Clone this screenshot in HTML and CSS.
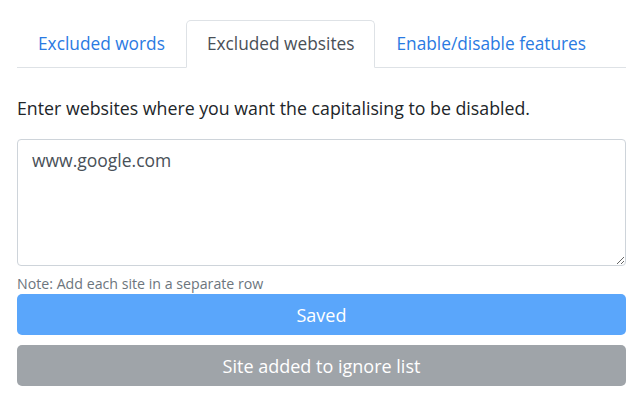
FILE: index.html
```html
<!DOCTYPE html>
<html lang="en">
<head>
<meta charset="utf-8">
<link rel="stylesheet" href="styles.css">
</head>
<body>
<div class="page">
  <ul class="tabs">
    <li class="tab"><a class="tab-link">Excluded words</a></li>
    <li class="tab"><a class="tab-link active">Excluded websites</a></li>
    <li class="tab"><a class="tab-link">Enable/disable features</a></li>
  </ul>
  <p class="intro">Enter websites where you want the capitalising to be disabled.</p>
  <textarea class="sites">www.google.com</textarea>
  <div class="note">Note: Add each site in a separate row</div>
  <button class="btn btn-primary">Saved</button>
  <button class="btn btn-secondary">Site added to ignore list</button>
</div>
</body>
</html>
```
FILE: styles.css
```css
* { box-sizing: border-box; }
html, body { margin: 0; padding: 0; background: #fff; }
body {
  font-family: "Open Sans", "Noto Sans", sans-serif;
  font-size: 17.5px;
  color: #212529;
}
.page {
  padding: 20px 14px 0 17px;
  display: flex;
  flex-direction: column;
}
.tabs {
  list-style: none;
  margin: 0;
  padding: 0;
  display: flex;
  border-bottom: 1px solid #dee2e6;
}
.tab { margin-bottom: -1px; }
.tab-link {
  display: block;
  height: 48px;
  line-height: 46px;
  padding: 0 20px;
  font-size: 17.3px;
  color: #2a7ae2;
  border: 1px solid transparent;
  border-top-left-radius: 5px;
  border-top-right-radius: 5px;
}
.tab-link.active {
  color: #495057;
  background: #fff;
  border-color: #dee2e6 #dee2e6 #fff;
}
.intro {
  margin: 27px 0 0;
  font-size: 17.75px;
  line-height: 26px;
}
.sites {
  margin-top: 18px;
  height: 127px;
  width: 100%;
  padding: 7px 14px;
  font-family: inherit;
  font-size: 17.5px;
  line-height: 26px;
  color: #495057;
  border: 1px solid #ced4da;
  border-radius: 4px;
  resize: vertical;
}
.note {
  margin-top: 9px;
  font-size: 14.2px;
  line-height: 18px;
  color: #6c757d;
}
.btn {
  display: block;
  width: 100%;
  height: 41px;
  border: none;
  border-radius: 5px;
  color: #fff;
  font-family: inherit;
  font-size: 18px;
  padding: 0;
}
.btn-primary { margin-top: 1px; background: #5aa6fb; }
.btn-secondary { margin-top: 10px; background: #9fa4a9; }
```
